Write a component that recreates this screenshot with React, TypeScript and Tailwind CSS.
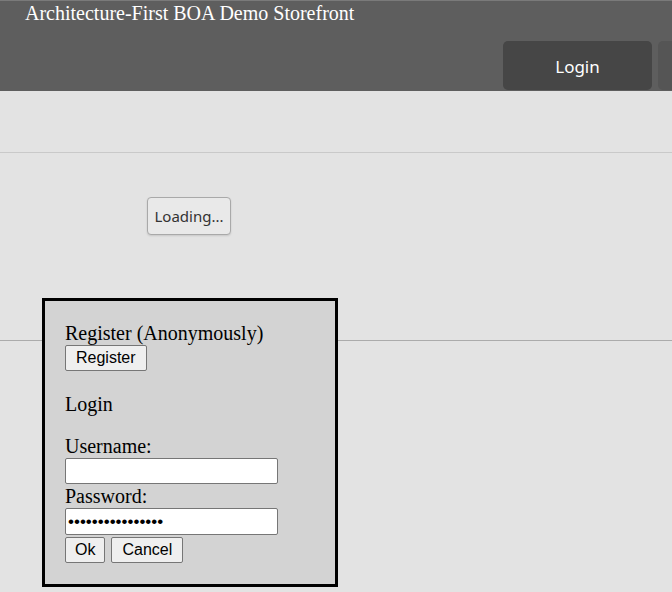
export default function App() {
  return (
    <div className="relative min-h-[592px] overflow-hidden bg-[#e3e3e3]">
      <header className="h-[91px] bg-[#5e5e5e] border-t border-[#7a7a7a] overflow-hidden">
        <div className="pl-[25px] pt-[1px] text-[20px] leading-[23px] text-white font-['Liberation_Serif',serif]">
          Architecture-First BOA Demo Storefront
        </div>
        <div className="mt-[16px] flex gap-[6px] pl-[503px] whitespace-nowrap">
          <button className="w-[149px] h-[49px] shrink-0 rounded-[5px] bg-[#464646] pt-[2px] text-white text-[17px] font-['Noto_Sans',sans-serif]">
            Login
          </button>
          <button className="w-[149px] h-[49px] shrink-0 rounded-[5px] bg-[#555555]"></button>
        </div>
      </header>

      <div className="h-[62px] border-b border-[#c9c9c9]"></div>

      <div className="h-[188px] border-b border-[#ababab] pl-[147px] pt-[44px]">
        <button className="h-[38px] w-[84px] rounded-[4px] border border-[#a9a9a9] bg-[#e9e9e9] text-[15px] text-[#333] shadow-[0_1px_2px_rgba(0,0,0,0.12)] font-['Noto_Sans',sans-serif]">
          Loading...
        </button>
      </div>

      <div className="absolute left-[42px] top-[298px] w-[296px] border-[3px] border-black bg-[#d3d3d3] px-[20px] pt-[21px] pb-[21px] text-black font-['Liberation_Serif',serif] text-[20px] leading-[23px]">
        <div>Register (Anonymously)</div>
        <button className="block h-[26px] px-[10px] border border-[#767676] rounded-[2px] bg-[#efefef] text-[16px] leading-[18px] font-['Liberation_Sans',sans-serif]">
          Register
        </button>
        <div className="mt-[22px]">Login</div>
        <div className="mt-[19px]">Username:</div>
        <input
          type="text"
          className="block w-[213px] h-[26px] border border-[#767676] bg-white rounded-[2px]"
        />
        <div className="leading-[24px]">Password:</div>
        <input
          type="password"
          defaultValue="passwordpassword"
          className="block w-[213px] h-[27px] border border-[#767676] bg-white rounded-[2px] px-[2px] text-[17px] font-['Liberation_Sans',sans-serif]"
        />
        <div className="mt-[2px] flex gap-[6px]">
          <button className="h-[26px] px-[9px] border border-[#767676] rounded-[2px] bg-[#efefef] text-[16px] leading-[18px] font-['Liberation_Sans',sans-serif]">
            Ok
          </button>
          <button className="h-[26px] px-[10px] border border-[#767676] rounded-[2px] bg-[#efefef] text-[16px] leading-[18px] font-['Liberation_Sans',sans-serif]">
            Cancel
          </button>
        </div>
      </div>
    </div>
  );
}
